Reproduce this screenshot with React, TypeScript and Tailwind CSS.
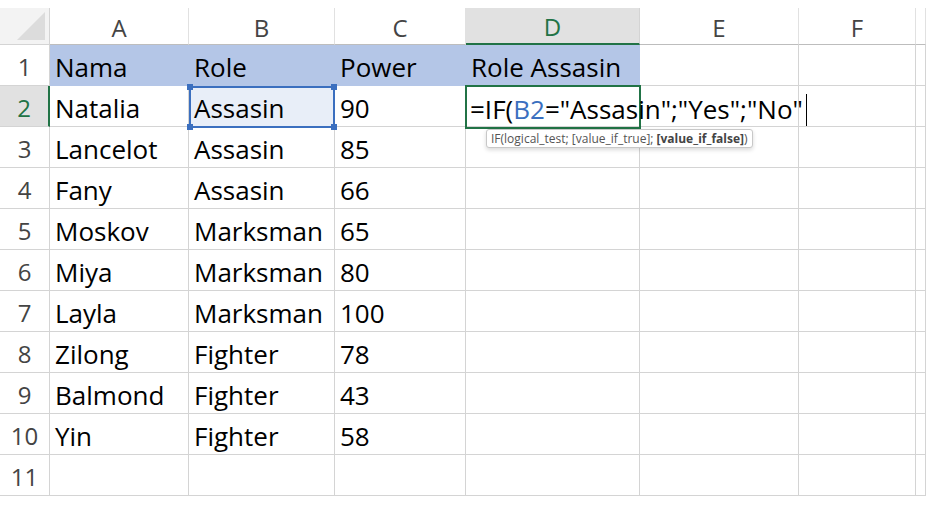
import React from "react";

const cols = ["A", "B", "C", "D", "E", "F", ""];
const widths = [139, 146, 131, 174, 159, 117, 10];
const data: string[][] = [
  ["Nama", "Role", "Power", "Role Assasin"],
  ["Natalia", "Assasin", "90", ""],
  ["Lancelot", "Assasin", "85"],
  ["Fany", "Assasin", "66"],
  ["Moskov", "Marksman", "65"],
  ["Miya", "Marksman", "80"],
  ["Layla", "Marksman", "100"],
  ["Zilong", "Fighter", "78"],
  ["Balmond", "Fighter", "43"],
  ["Yin", "Fighter", "58"],
  [],
];

export default function App() {
  const font = { fontFamily: '"Open Sans", "Noto Sans", sans-serif' };
  return (
    <div className="relative w-[926px] h-[507px] overflow-hidden bg-white pt-[8px]" style={font}>
      <div className="flex h-[37px]">
        <div className="w-[50px] h-full bg-[#f3f3f3] border-r border-b border-[#d4d4d4] relative">
          <div className="absolute right-[4px] bottom-[4px] w-0 h-0 border-l-[28px] border-l-transparent border-b-[28px] border-b-[#dcdcdc]" />
        </div>
        {cols.map((c, i) => (
          <div
            key={i}
            style={{ width: widths[i] }}
            className={
              "h-full flex items-center justify-center pt-[3px] text-[24px] border-r " +
              (c === "D"
                ? "bg-[#e1e1e1] text-[#217346] border-[#d4d4d4] border-b-2 border-b-[#217346]"
                : "bg-[#ffffff] text-[#444] border-[#e1e1e1] border-b border-b-[#bdbdbd]")
            }
          >
            {c}
          </div>
        ))}
      </div>
      {data.map((row, r) => (
        <div key={r} className="flex h-[41px]">
          <div
            className={
              "w-[50px] h-full flex items-center justify-center pt-[3px] text-[24px] border-r border-b " +
              (r === 1
                ? "bg-[#e1e1e1] text-[#217346] border-b-[#d4d4d4] border-r-2 border-r-[#217346]"
                : "bg-white text-[#444] border-[#d4d4d4]")
            }
          >
            {r + 1}
          </div>
          {widths.map((w, i) => (
            <div
              key={i}
              style={{ width: w }}
              className={
                "h-full flex items-center pl-[5px] pt-[4px] text-[26px] text-black border-r border-b whitespace-nowrap " +
                (r === 0 && i < 4 ? "bg-[#b4c6e7] border-[#b4c6e7]" : "border-[#d4d4d4]") +
                (r === 1 && i === 1 ? " bg-[#e8eef8]" : "")
              }
            >
              {row[i] ?? ""}
            </div>
          ))}
        </div>
      ))}
      {/* selection B2 */}
      <div className="absolute left-[189px] top-[86px] w-[146px] h-[42px] border-2 border-[#3b6fbf]">
        {["-left-[4px] -top-[4px]", "-right-[4px] -top-[4px]", "-left-[4px] -bottom-[4px]", "-right-[4px] -bottom-[4px]"].map((p, k) => (
          <div key={k} className={"absolute w-[6px] h-[6px] bg-[#3b6fbf] " + p} />
        ))}
      </div>
      {/* active cell D2 */}
      <div className="absolute left-[465px] top-[85px] w-[176px] h-[44px] border-2 border-[#217346]" />
      <div className="absolute left-[470px] top-[87px] h-[41px] pt-[4px] flex items-center text-[26px] text-black whitespace-nowrap">
        =IF(<span className="text-[#3b6fbf]">B2</span>="Assasin";"Yes";"No"
        <span className="ml-[3px] inline-block w-[1.5px] h-[32px] bg-black" />
      </div>
      {/* tooltip */}
      <div className="absolute left-[486px] top-[129px] h-[19px] px-[4px] flex items-center bg-white border border-[#c8c8c8] rounded-[3px] shadow-[0_2px_4px_rgba(0,0,0,0.15)] text-[12px] text-[#555] whitespace-nowrap">
        IF(logical_test; [value_if_true]; <b className="ml-[3px] text-[#444]">[value_if_false]</b>)
      </div>
    </div>
  );
}
